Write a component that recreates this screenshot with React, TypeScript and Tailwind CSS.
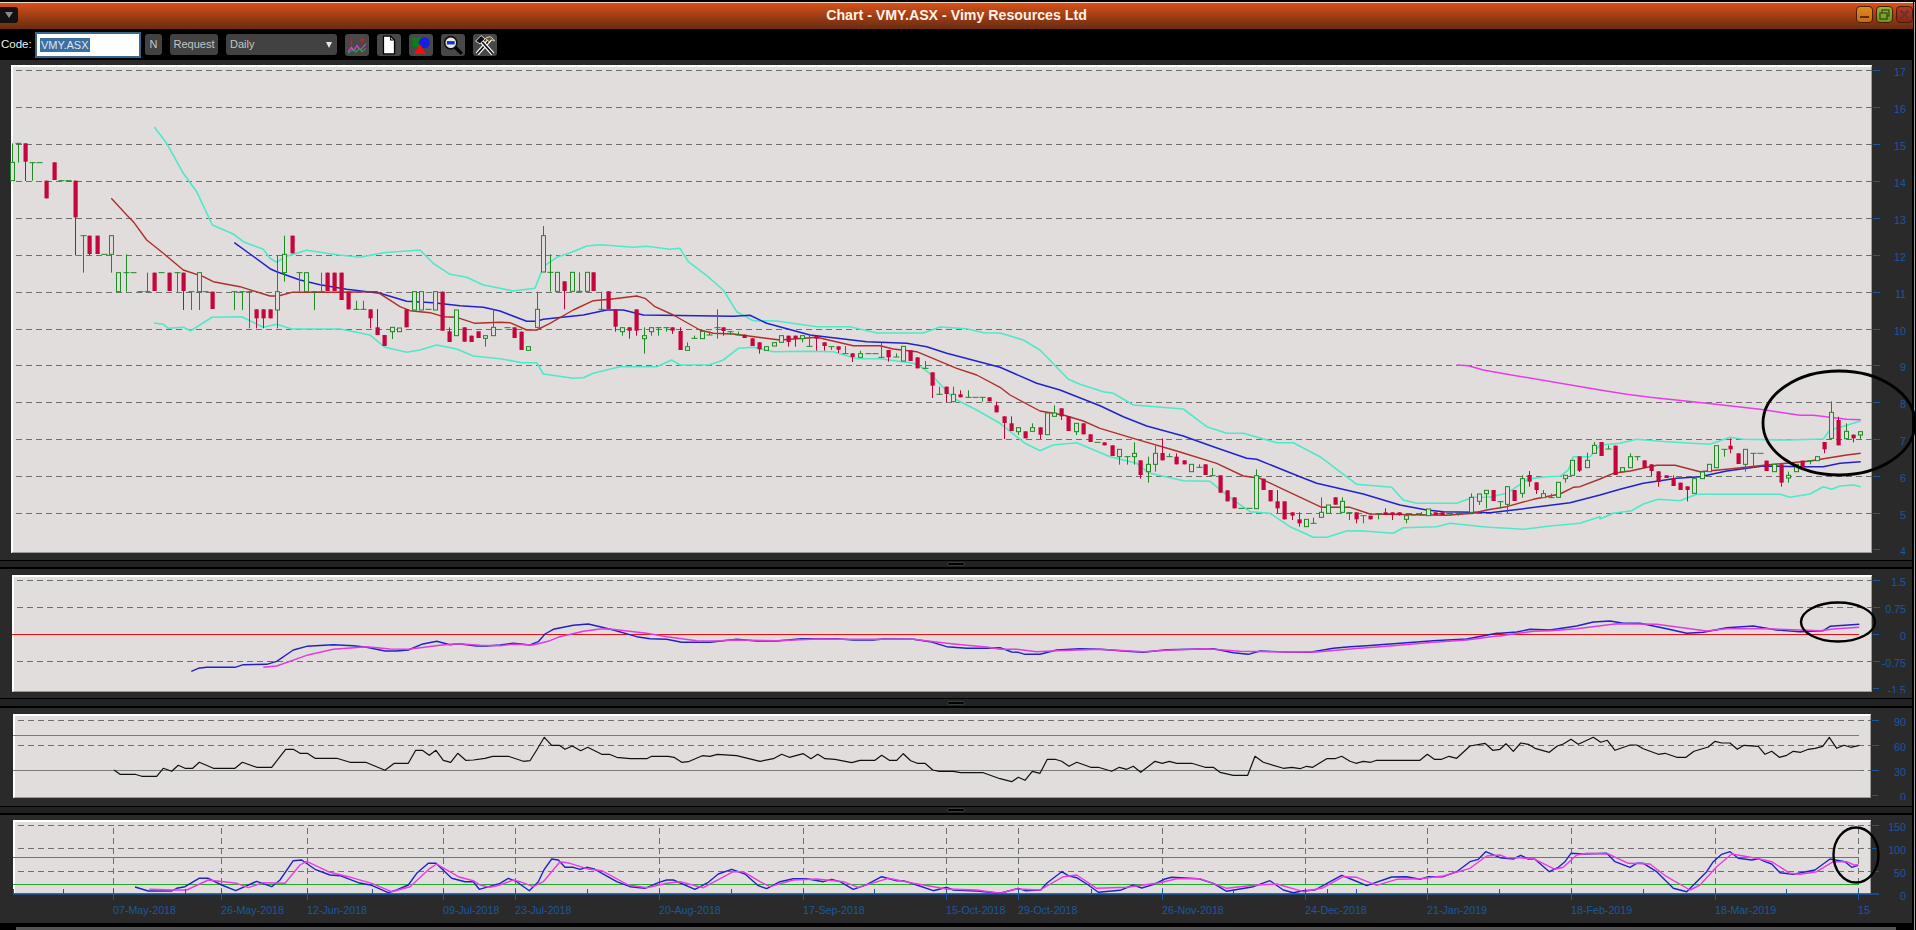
import React from "react";

const P = (x0: number, y0: number, s: string) =>
  s.trim().split(/\s+/).map((p) => {
    const [a, b] = p.split(",").map(Number);
    return `${(x0 + a / 3).toFixed(1)},${(y0 + b / 3).toFixed(1)}`;
  }).join(" ");
const J = (...a: string[]) => a.join(" ");

type C = { k: string; x: number; t: number; b: number; w1: number; w2: number };
const cs = (x0: number, y0: number, s: string): C[] =>
  s.trim().split(/\s+/).map((e) => {
    const k = e[0];
    const n = e.slice(1).split(",").map(Number);
    const x = Math.round(x0 + n[0] / 3);
    const t = y0 + n[1] / 3;
    const b = k === "F" ? t : y0 + n[2] / 3;
    const ex = n.slice(k === "F" ? 2 : 3).map((v) => y0 + v / 3);
    return { k, x, t, b, w1: Math.min(t, b, ...ex), w2: Math.max(t, b, ...ex) };
  });

const candles: C[] = [
  ...cs(0, 130, `G36,97,152,40 F55,40,98 R75,40,95,153 F97,98,152 F118,98 R138,152,205 R162,97,150 F183,152 F204,152 R225,152,262,376 F248,317,428 R267,317,372,376 R290,317,372 F312,373 G334,317,373,428 G355,428,485 F377,428,373,485 F398,428 F420,485 F442,485,428 R462,428,483 F484,428 R507,428,483 F530,428,487 R549,428,483,540 F572,485,540 G596,428,485,540 F616,485 R636,485,537 F703,485,540 F725,485,540 F746,485,595 R768,538,565,595 R790,538,565,595 R810,538,565 G832,485,540,376,595 G853,373,428,317,455 R876,317,370 F897,428,485 G919,428,485 F941,485,540 F962,485,428 R981,428,483 R1002,428,483 R1023,428,510 R1044,485,538 F1067,538,512 F1089,538,512 R1110,538,565,595 R1132,592,615,537 R1152,615,648 G1177,592,605,627 G1198,594,605 R1218,538,592 G1241,485,540 G1262,485,540 F1285,538 G1306,485,540 R1326,485,602 R1347,604,636,592 G1369,540,617 R1392,592,635 R1412,617,636 R1434,604,624 G1456,617,625,650 G1478,592,617,538`),
  ...cs(500, 210, `F20,353 R42,352,384 R63,365,420 G85,410,421 G110,298,352,245 G130,77,186,48 F151,187,133,245 G172,187,244 R192,214,243,298 G217,187,244 F238,244,187 G260,187,244 R279,187,243 F302,298,245 R324,244,297 R345,298,350,365 G367,353,365,377 R387,352,362,386 R408,298,362,377 G433,377,386,352,431 G454,353,365,377 F475,353,377 F497,353,365 R516,352,362,372 R540,363,420,352 G562,410,421,397 F583,385,377 G605,364,386 F627,375,365 F650,353,298,386 R669,352,363,377 F691,365,375 F713,375,365 R732,374,384 R756,385,408 R778,397,418,431 G799,410,421 G821,398,408 G842,377,397 R864,377,396,410 R885,377,386,410 G907,377,386,397 F928,409,375 R948,378,386,422 R972,397,408,422 F994,410,420 R1014,409,419,429 F1036,431,408 R1056,430,441,456 G1081,431,442,422 F1103,431 F1125,431 F1144,442,398 R1164,420,442,455 F1189,441,430 G1210,409,453 R1230,421,453 R1251,442,475 F1274,475,453 R1296,487,527,564 F1318,553,530 R1338,530,552,577 G1360,553,575,530 R1381,553,562,541 F1405,562,541 F1425,562 F1447,562,575 R1467,562,574 R1488,586,607,575`),
  ...cs(1000, 340, `R12,229,249,297 R33,250,273,229 G55,263,275,285 R75,274,295 G97,263,274,250 R120,262,284,297 G142,219,284 G163,219,229,196 R183,205,229,240 R204,229,273 G229,250,275,285 R249,250,283 R270,283,306 F292,307 R312,307,316 R336,316,348 G358,328,350,374 F380,350,374 G401,340,350,307,374 R420,361,405,416 G445,373,395,350,428 G466,340,373,317,395 R486,339,361,295 F508,350,340 R528,350,373,340 R551,361,373 G574,373,395 F596,382,373 R615,373,405 F637,407,384 R660,406,458 R681,451,484 R702,472,505 F724,505 F746,505 G769,407,506,388 R789,416,450 R810,450,484 R832,484,505,450,520 R852,484,538 R876,517,527,540 R897,538,550,517,560 G919,538,560 F940,550,533 G964,517,532,472 G985,495,520 R1005,472,494 G1027,484,517,472 F1048,518,540 R1068,517,538,550 F1090,527,550 R1110,527,538 F1135,521,538 R1156,517,525,505 R1176,517,525,540 R1197,517,525,527 G1219,527,538,550 F1240,525 F1264,525,516 G1285,507,527 R1305,517,525 R1326,517,525 F1350,520,527 F1373,520,527 F1392,520 G1414,472,517,460 G1436,462,484,495 G1459,451,461,505`),
  ...cs(1490, 400, `R8,270,303 F31,305,325 G52,260,313,340 R72,270,303 G97,236,280,226,293 R117,225,245,213,260 R138,247,270,282 G160,281,293,270 F182,293,281 G205,247,292 G226,226,236,248 G247,181,226 R267,169,212,216 G290,181,203,158 G313,136,160,126 R333,126,168 F355,147,136 R375,137,225`),
  ...cs(1600, 340, `G67,383,395 G91,350,383,340 F112,350,361 R132,361,383 R153,373,393,408 R174,394,426,440 R198,406,414 R219,414,438,406 R240,428,450 R261,439,450,484 G283,416,460 G307,396,416 G328,373,395 G349,317,383 F371,328,350 R390,317,328,295,340 R414,340,372 G436,328,373,395 F458,340,384 F480,340 R498,362,393 G523,373,395 R543,373,428,440 G565,406,414,395,428 G587,373,395 R606,362,382 F631,362,373 G652,350,362 R672,306,328,340 G694,217,295,184 R714,240,316,230 G739,274,296,250 R759,284,295,307 G781,275,285,297`),
];

const upper = J(
  P(0, 130, `463,-9 500,40 550,130 590,185 637,285 700,312 730,335 790,358 810,385 830,397 855,380 920,361 1010,374 1080,382 1150,368 1260,360 1300,400 1350,433 1400,442 1450,465`),
  P(500, 210, `0,235 40,243 105,235 130,170 170,142 215,127 260,108 300,104 400,112 440,109 510,118 540,115 565,155 620,197 670,240 710,305 760,332 830,333 950,350 1050,350 1130,369 1270,369 1320,351 1400,356 1450,368`),
  P(1000, 340, `0,-21 70,0 120,30 205,118 240,133 310,155 340,160 400,195 550,207 620,260 680,280 730,280 830,308 880,308 960,350 1070,433 1175,442 1210,480 1250,490 1370,490 1420,472`),
  P(1490, 400, `0,291 50,280 95,250 115,237 170,230 210,229 235,210 250,170 300,170`),
  P(1600, 340, `0,315 60,310 110,298 200,305 330,313 390,292 430,298 560,300 670,297 690,270 720,262 782,243`)
);
const lower = J(
  P(0, 130, `462,579 490,583 505,595 550,592 572,602 636,562 725,560 790,592 830,583 875,597 1020,597 1110,615 1155,652 1220,667 1260,660 1310,645 1370,657 1420,678`),
  P(500, 210, `0,446 65,458 110,458 130,492 220,505 250,503 280,490 360,470 470,470 515,450 540,465 630,464 670,450 715,415 760,412 820,425 920,424 1000,425 1070,446 1140,446 1240,460 1270,475 1300,500 1360,565 1430,600`),
  P(1000, 340, `0,250 75,310 120,332 160,315 230,308 330,350 410,370 445,398 550,422 630,424 700,480 750,515 810,520 870,560 940,592 980,592 1040,573 1080,572 1180,580 1210,563 1310,560 1350,550 1450,560`),
  P(1490, 400, `0,382 100,388 180,378 270,370 330,350`),
  P(1600, 340, `0,537 40,520 95,512 130,492 175,478 240,482 290,463 540,463 570,472 630,462 670,440 695,448 720,438 760,435 782,440`)
);
const maRed = J(
  P(0, 130, `334,205 380,255 400,275 440,330 490,370 550,420 610,440 640,455 720,470 810,498 835,498 875,487 1000,487 1130,485 1200,530 1230,542 1290,548 1330,560 1370,562 1425,580`),
  P(500, 210, `0,337 30,338 80,360 110,360 150,340 220,300 280,272 330,268 410,258 435,265 465,290 520,315 600,360 640,370 700,372 840,390 950,382 1060,407 1140,407 1180,417 1250,425 1370,475 1430,495`),
  P(1000, 340, `0,142 30,165 120,213 190,225 250,243 300,265 410,298 530,333 650,370 730,408 780,415 850,448 965,502 1050,502 1110,522 1340,526 1420,520 1460,510`),
  P(1490, 400, `50,320 130,298 210,282 250,262 270,260`),
  P(1600, 340, `0,417 40,400 90,393 170,376 225,376 300,395 380,388 500,375 630,363 680,355 740,345 782,340`)
);
const maBlue = J(
  P(0, 130, `703,338 750,372 810,416 830,425 900,450 960,464 1040,478 1140,490 1220,514 1300,518 1380,527 1450,532`),
  P(500, 210, `0,303 80,334 110,334 130,328 250,315 320,300 370,300 430,315 700,319 750,316 800,340 930,375 1100,395 1220,400 1280,410 1340,430`),
  P(1000, 340, `0,82 110,130 180,150 300,197 370,230 440,258 550,288 640,320 740,355 770,358 900,410 950,430 1090,462 1200,495 1280,510 1330,515 1420,517`),
  P(1490, 400, `0,338 70,330 110,325 240,308`),
  P(1600, 340, `0,465 60,448 130,430 230,415 300,410 380,393 490,378 600,380 670,380 720,370 782,365`)
);
const maMag = J(
  P(1000, 340, `1370,75 1405,77 1450,90 1500,99`),
  P(1600, 340, `0,150 80,163 150,172 320,190 480,208 600,226 640,226 740,238 782,239`)
);

const macdBlue = J(
  P(0, 540, `574,394 595,385 620,382 705,382 730,374 800,373 830,364 880,330 920,319 1000,314 1060,317 1100,322 1155,333 1190,333 1225,330 1265,313 1310,304 1350,314 1375,311 1430,318 1460,318`),
  P(500, 590, `0,165 40,160 90,165 115,155 135,132 160,118 220,106 265,102 300,110 340,120 410,140 450,146 500,148 545,157 630,157 710,148 770,153 830,153 905,146 950,146 1010,146 1060,150 1120,150 1150,147 1240,148 1290,155 1340,170 1400,175 1460,175`),
  P(1000, 590, `0,173 35,186 55,187 75,193 120,193 170,180 240,176 300,178 380,184 430,187 500,179 640,176 700,188 745,193 780,183 860,186 930,187 1000,175 1050,170 1100,167 1200,160 1300,152 1400,147 1490,130`),
  P(1500, 560, `0,220 50,216 90,208 150,210 230,198 280,186 330,183 370,190 420,190 500,206 560,220 610,217 680,203 760,198 830,210 900,215 970,212 990,199 1078,193`)
);
const macdMag = J(
  P(0, 540, `790,382 830,378 920,346 1000,328 1040,325 1100,320 1170,327 1225,328 1320,316 1375,311 1440,316`),
  P(500, 590, `0,167 40,163 100,165 150,152 180,140 250,124 300,117 330,117 440,130 500,140 590,152 650,153 700,150 830,152 950,147 1050,148 1240,148 1340,160 1400,166 1460,171`),
  P(1000, 590, `0,178 50,178 110,185 170,182 300,178 430,185 500,181 620,176 720,184 880,186 950,186 1060,176 1170,168 1300,157 1400,150 1490,138`),
  P(1500, 560, `0,228 40,222 100,214 150,212 230,206 350,191 470,193 620,213 680,206 800,206 900,210 960,212 1000,207 1078,202`)
);
const rsi = J(
  P(0, 540, `342,690 360,703 405,703 425,709 470,709 490,685 515,694 535,676 555,685 578,685 598,667 640,685 705,685 727,667 770,682 815,682 857,628 880,628 900,640 922,640 945,655 1010,655 1050,667 1097,667 1155,691 1183,670 1225,670 1247,631 1267,631 1288,646 1308,631 1330,661 1352,667 1373,640 1397,661 1420,660 1455,655 1478,649`),
  P(500, 590, `0,499 25,499 70,514 90,512 110,480 133,442 155,466 178,466 195,478 217,468 242,482 263,472 305,493 328,493 350,502 390,506 440,506 455,499 505,499 522,502 545,517 565,515 607,497 630,499 652,493 710,497 780,514 820,506 845,493 868,502 910,491 933,506 953,493 975,506 1005,508 1055,518 1080,511 1125,511 1145,496 1168,511 1190,511 1210,491 1232,512 1252,520 1275,520 1298,540 1318,544 1360,544 1382,548 1450,548`),
  P(1000, 590, `0,566 35,575 55,562 75,571 97,544 120,550 142,508 165,508 185,514 207,529 230,517 272,532 295,532 335,544 358,532 380,538 400,529 422,547 465,514 487,520 508,514 530,520 575,520 615,532 640,532 660,547 700,556 743,556 765,499 790,517 850,535 875,532 900,536 920,529 938,532 980,506 1005,506 1025,499 1050,514 1068,520 1090,514 1112,517 1130,511 1260,511 1282,493 1303,508 1325,508 1347,499 1370,505 1410,468 1455,460 1478,481`),
  P(1500, 560, `0,568 18,551 40,574 62,549 85,553 105,565 148,577 172,558 190,552 213,538 235,553 280,532 302,547 322,541 345,571 390,555 410,555 430,566 475,583 495,580 530,592 558,592 582,574 625,561 645,544 665,549 690,549 712,568 732,556 775,559 795,583 815,574 838,592 860,586 880,574 902,577 925,568 945,565 968,559 988,532 1010,565 1032,556 1052,562 1078,556`)
);
const stoBlue = J(
  P(0, 540, `405,1041 445,1053 515,1053 530,1045 555,1040 597,1015 625,1015 665,1035 707,1052 770,1024 815,1040 840,1020 880,962 905,960 945,988 990,1005 1020,1007 1075,1028 1115,1036 1165,1058 1190,1050 1225,1035 1250,1000 1285,970 1308,970 1355,1015 1395,1025 1420,1025 1438,1048`),
  P(500, 590, `0,880 25,865 50,875 88,902 115,875 133,838 155,807 175,810 195,832 220,832 240,838 260,832 285,838 350,875 390,890 435,895 475,878 500,870 520,870 585,898 625,877 655,852 695,838 735,852 775,887 800,896 840,875 880,866 920,866 970,875 995,868 1020,875 1060,898 1100,884 1145,860 1190,872 1210,872 1250,885 1300,902 1340,892 1360,900 1430,903`),
  P(1000, 590, `0,910 55,895 75,902 122,900 140,880 185,845 205,857 230,863 265,885 295,907 360,901 400,885 425,894 460,884 495,867 515,862 595,866 640,880 680,904 760,890 810,872 850,900 880,908 910,902 945,900 985,878 1025,856 1060,870 1100,887 1175,861 1220,860 1260,868 1285,860 1330,860 1370,845 1410,815 1435,808 1457,785`),
  P(1500, 560, `0,893 40,897 62,886 85,897 105,898 148,935 175,922 195,905 213,880 250,882 320,880 345,905 390,922 410,910 430,910 470,935 520,985 560,995 620,935 640,905 665,883 690,875 715,895 755,900 775,896 795,905 815,912 840,938 880,943 945,930 990,897 1035,905 1055,922 1075,916`)
);
const stoMag = J(
  P(0, 540, `448,1048 520,1050 560,1050 625,1020 710,1030 745,1043 790,1028 855,1030 900,975 920,964 990,997 1045,1010 1115,1030 1175,1055 1230,1040 1290,985 1310,972 1375,1010 1420,1022 1440,1035 1470,1042`),
  P(500, 590, `0,885 40,870 60,875 100,890 130,875 180,815 210,820 260,836 305,842 385,885 440,893 500,880 540,875 610,893 700,845 730,845 780,875 810,890 880,870 950,867 1030,875 1075,892 1165,865 1240,880 1340,897 1430,900`),
  P(1000, 590, `0,910 50,897 120,900 190,860 230,855 290,895 380,892 480,878 530,866 600,866 680,895 770,885 830,882 910,905 970,893 1030,860 1070,862 1130,886 1190,868 1260,866 1330,858 1410,835 1460,798`),
  P(1500, 560, `0,885 20,893 60,893 105,898 165,928 190,922 230,885 260,880 325,882 385,910 450,912 500,950 570,990 600,975 650,920 695,882 730,888 775,896 815,905 870,940 900,943 950,935 1000,905 1040,905 1062,915 1075,914`)
);

const dates: [string, number][] = [
  ["07-May-2018", 113], ["26-May-2018", 221], ["12-Jun-2018", 307], ["09-Jul-2018", 443], ["23-Jul-2018", 515],
  ["20-Aug-2018", 659], ["17-Sep-2018", 803], ["15-Oct-2018", 946], ["29-Oct-2018", 1018], ["26-Nov-2018", 1162],
  ["24-Dec-2018", 1305], ["21-Jan-2019", 1427], ["18-Feb-2019", 1571], ["18-Mar-2019", 1715], ["15-", 1858],
];
const minor = [13, 63, 185, 372, 587, 731, 874, 1091, 1233, 1327, 1356, 1499, 1643, 1786];

const TICK = "#17589f";
const GRID = "#6e6e6e";

function Grid({ ys, x1, x2 }: { ys: number[]; x1: number; x2: number }) {
  return (
    <>
      {ys.map((y) => (
        <g key={y}>
          <line x1={x1} x2={x2} y1={y} y2={y} stroke={GRID} strokeDasharray="6 4" />
          <line x1={x2 + 1} x2={x2 + 8} y1={y} y2={y} stroke={TICK} />
        </g>
      ))}
    </>
  );
}
function Line({ pts, c, w = 1.4 }: { pts: string; c: string; w?: number }) {
  return <polyline points={pts} fill="none" stroke={c} strokeWidth={w} strokeLinejoin="round" />;
}

function Plot({ x, y, w, h, cls, children }: { x: number; y: number; w: number; h: number; cls: string; children: React.ReactNode }) {
  return (
    <div className={`relative shrink-0 bg-[#e0dddc] ${cls}`}>
      <div className="absolute inset-0 border-t-2 border-l-2 border-t-white border-l-white border-b border-r border-b-[#9a9a9a] border-r-[#9a9a9a]" />
      <svg width={w} height={h} viewBox={`${x} ${y} ${w} ${h}`} className="absolute left-0 top-0 z-10 overflow-visible">
        {children}
      </svg>
    </div>
  );
}

function Scale({ top, labels, cls }: { top: number; labels: [string, number][]; cls: string }) {
  return (
    <div className={`relative flex-1 overflow-hidden ${cls}`}>
      {labels.map(([t, y]) => (
        <span
          key={t}
          className="absolute right-[6px] -translate-y-1/2 whitespace-nowrap text-[10.7px] leading-none text-[#17589f]"
          style={{ top: y - top }}
        >
          {t}
        </span>
      ))}
    </div>
  );
}

function Sash({ cls }: { cls: string }) {
  return (
    <div className={`flex shrink-0 items-center justify-center border-t border-b-2 border-black bg-[#222224] mr-px ${cls}`}>
      <div className="h-[4px] w-[18px] rounded-[2px] border border-[#3a3a3a] bg-black" />
    </div>
  );
}

function TB({ children, cls }: { children: React.ReactNode; cls: string }) {
  return (
    <div className={`flex h-[21px] items-center rounded-[3px] bg-[#424242] text-[11px] text-[#c4c4c4] ${cls}`}>{children}</div>
  );
}
function IconBtn({ children }: { children: React.ReactNode }) {
  return (
    <div className="flex h-[22px] w-[24px] items-center justify-center rounded-[3px] bg-[#484848]">
      <svg width="20" height="20" viewBox="0 0 18 18">{children}</svg>
    </div>
  );
}
function WinBtn({ cls, children }: { cls: string; children: React.ReactNode }) {
  return (
    <div className={`flex h-[17px] w-[17px] items-center justify-center rounded-[4px] border border-[#4a1d08] ${cls}`}>
      <svg width="13" height="13" viewBox="0 0 13 13">{children}</svg>
    </div>
  );
}

export default function App() {
  return (
    <div className="flex h-[930px] w-[1916px] overflow-hidden bg-black font-['Liberation_Sans',Arial,sans-serif]">
      <div className="flex w-[1913px] shrink-0 flex-col pt-[2px]">
        {/* title */}
        <div className="relative flex h-[27px] shrink-0 items-center justify-center border-t border-[#f3d9c6] bg-linear-to-b from-[#d9511a] to-[#682b0f]">
          <span className="text-[14.2px] font-bold text-[#fff3e6]">Chart - VMY.ASX - Vimy Resources Ltd</span>
          <div className="absolute left-0 top-[4px] flex h-[16px] w-[18px] items-center justify-center rounded-r-[3px] bg-[#111]">
            <div className="h-0 w-0 border-x-[4px] border-t-[6px] border-x-transparent border-t-[#8a8a8a]" />
          </div>
          <div className="absolute right-0 top-[3px] flex gap-[3px]">
            <WinBtn cls="bg-linear-to-b from-[#e08a20] to-[#c96a12]">
              <rect x="2" y="8" width="9" height="2" fill="#5a3208" />
            </WinBtn>
            <WinBtn cls="bg-linear-to-b from-[#93b437] to-[#6d9126]">
              <rect x="4" y="2" width="7" height="6" fill="none" stroke="#37500f" strokeWidth="1.3" />
              <rect x="2" y="5" width="7" height="6" fill="#7fa32e" stroke="#37500f" strokeWidth="1.3" />
            </WinBtn>
            <WinBtn cls="bg-linear-to-b from-[#b53a25] to-[#8e2415]">
              <path d="M2.5 2.5 10.5 10.5 M10.5 2.5 2.5 10.5" stroke="#5c3a32" strokeWidth="2.2" />
            </WinBtn>
          </div>
        </div>
        {/* toolbar */}
        <div className="flex h-[31px] shrink-0 items-center bg-black">
          <span className="ml-[1px] w-[34px] text-[11.5px] text-[#eeeeee]">Code:</span>
          <div className="flex h-[26px] w-[106px] items-center border-2 border-[#3b6690] bg-white pl-[3px]">
            <span className="bg-[#3c6e9f] px-px text-[11px] leading-[14px] text-[#dfe8f0]">VMY.ASX</span>
          </div>
          <TB cls="ml-[4px] w-[17px] justify-center">N</TB>
          <TB cls="ml-[8px] w-[48px] justify-center">Request</TB>
          <TB cls="ml-[8px] w-[111px] justify-between pl-[4px] pr-[5px]">
            <span>Daily</span>
            <span className="h-0 w-0 border-x-[3.5px] border-t-[6px] border-x-transparent border-t-[#e8e8e8]" />
          </TB>
          <div className="ml-[8px] flex gap-[8px]">
            <IconBtn>
              <path d="M4 2.5v.9 M4 5v4.5" stroke="#e0143c" strokeWidth="1.4" />
              <path d="M13.5 2v5 M11 4.5h5" stroke="#d02020" strokeWidth="1.1" />
              <path d="M1 15 4 11 6.5 14 9 9.5 12 13.5 17 8" fill="none" stroke="#e040e0" strokeWidth="1" />
              <path d="M1 16.5 5 13 8 15.5 11 12 13.5 15 17 12" fill="none" stroke="#30a050" strokeWidth="1" />
            </IconBtn>
            <IconBtn>
              <path d="M4 1h6.5L14 4.5V17H4z" fill="#fff" stroke="#000" strokeWidth="1.2" />
              <path d="M10.5 1v3.5H14" fill="none" stroke="#000" strokeWidth="1" />
            </IconBtn>
            <IconBtn>
              <rect x="1" y="2" width="9" height="9" fill="#0f7a1f" />
              <circle cx="12" cy="7" r="5" fill="#1420e0" />
              <path d="M8 8 13.5 17H2.5z" fill="#f01010" />
            </IconBtn>
            <IconBtn>
              <path d="M11 11 17 17" stroke="#000" strokeWidth="3" />
              <circle cx="7" cy="7" r="5.5" fill="#e8e8e8" stroke="#111" strokeWidth="1.5" />
              <rect x="3.5" y="5.5" width="7" height="3" fill="#1630c8" />
            </IconBtn>
            <IconBtn>
              <path d="M2 17 14 3.5" stroke="#fff" strokeWidth="3.6" />
              <path d="M2 17 14 3.5" stroke="#111" strokeWidth="1.4" />
              <path d="M16 17 4 3.5" stroke="#fff" strokeWidth="3.6" />
              <path d="M16 17 4 3.5" stroke="#111" strokeWidth="1.4" />
              <path d="M0.5 5.5 5.5 0.5l3.5 3-4.5 4.5z" fill="#111" stroke="#eee" strokeWidth="0.8" />
              <path d="M9.5 3c3.5-2.5 6-1.5 8 2.5-2.5-1.5-3.5-1.5-4.5 1z" fill="#6a5624" stroke="#eee" strokeWidth="0.8" />
            </IconBtn>
          </div>
        </div>

        {/* price pane */}
        <div className="mr-px flex h-[500px] shrink-0 bg-[#2b2a2b] pl-[11px] pt-[5px]">
          <Plot x={11} y={65} w={1861} h={488} cls="h-[488px] w-[1861px]">
            <Grid ys={[70.5, 107.5, 144.5, 181.5, 218.5, 255.5, 292.5, 329.5, 365.5, 402.5, 439.5, 476.5, 513.5]} x1={16} x2={1872} />
            <line x1={1873} x2={1880} y1={549.5} y2={549.5} stroke={TICK} />
            <Line pts={upper} c="#4fe8c8" w={1.6} />
            <Line pts={lower} c="#4fe8c8" w={1.6} />
            <Line pts={maBlue} c="#2222cc" w={1.5} />
            <Line pts={maRed} c="#ad302a" w={1.4} />
            <Line pts={maMag} c="#e83ce8" w={1.5} />
            {candles.map((c, i) => {
              const green = c.k !== "R";
              const col = green ? "#1f8a24" : "#c4063c";
              const cx = c.x + 0.5;
              return (
                <g key={i}>
                  {c.w2 > c.w1 && <line x1={cx} x2={cx} y1={c.w1} y2={c.w2} stroke={col} />}
                  {c.k === "F" && <line x1={cx - 3} x2={cx + 3} y1={c.t} y2={c.t} stroke={col} />}
                  {c.k === "G" && <rect x={cx - 2} y={c.t} width={4} height={c.b - c.t} fill="#e0dddc" stroke={col} />}
                  {c.k === "R" && <rect x={cx - 2} y={c.t} width={4.2} height={c.b - c.t} fill={col} />}
                </g>
              );
            })}
            <ellipse cx={1839} cy={423} rx={76} ry={52} fill="none" stroke="#000" strokeWidth={2.8} />
          </Plot>
          <Scale top={65} cls="h-[495px]" labels={[["17", 72], ["16", 109], ["15", 146], ["14", 183], ["13", 220], ["12", 257], ["11", 294], ["10", 331], ["9", 367], ["8", 404], ["7", 441], ["6", 478], ["5", 515], ["4", 551]]} />
        </div>
        <Sash cls="h-[9px]" />

        {/* macd pane */}
        <div className="mr-px flex h-[129px] shrink-0 bg-[#2b2a2b] pl-[12px] pt-[6px]">
          <Plot x={12} y={575} w={1860} h={117} cls="h-[117px] w-[1860px]">
            <Grid ys={[580.5, 607.5, 661.5]} x1={17} x2={1872} />
            <line x1={1873} x2={1879} y1={634.5} y2={634.5} stroke={TICK} />
            <line x1={1873} x2={1879} y1={688.5} y2={688.5} stroke={TICK} />
            <line x1={12} x2={1859} y1={634.5} y2={634.5} stroke="#ee1010" />
            <Line pts={macdBlue} c="#2222c4" />
            <Line pts={macdMag} c="#e03ce0" />
            <ellipse cx={1838} cy={622} rx={37} ry={19.5} fill="none" stroke="#000" strokeWidth={2.4} />
          </Plot>
          <Scale top={575} cls="h-[118px]" labels={[["1.5", 582], ["0.75", 609], ["0", 636], ["-0.75", 663], ["-1.5", 690]]} />
        </div>
        <Sash cls="h-[10px]" />

        {/* rsi pane */}
        <div className="mr-px flex h-[98px] shrink-0 bg-[#2b2a2b] pl-[13px] pt-[6px]">
          <Plot x={13} y={714} w={1858} h={84} cls="h-[84px] w-[1858px]">
            <Grid ys={[720.5, 745.5, 770.5]} x1={18} x2={1871} />
            <line x1={1872} x2={1878} y1={795.5} y2={795.5} stroke={TICK} />
            <line x1={13} x2={1859} y1={735.5} y2={735.5} stroke="#7a7a7a" />
            <line x1={13} x2={1859} y1={770.5} y2={770.5} stroke="#7a7a7a" />
            <Line pts={rsi} c="#111111" w={1.2} />
          </Plot>
          <Scale top={714} cls="h-[86px]" labels={[["90", 722], ["60", 747], ["30", 772], ["0", 797]]} />
        </div>
        <Sash cls="h-[9px]" />

        {/* stochastic pane */}
        <div className="mr-px flex h-[108px] shrink-0 bg-[#2b2a2b] pl-[13px] pt-[5px]">
          <div className="flex w-[1858px] shrink-0 flex-col">
            <Plot x={13} y={820} w={1858} h={74} cls="h-[74px] w-[1858px]">
              <Grid ys={[825.5, 848.5, 871.5]} x1={18} x2={1871} />
              {dates.map(([d, x]) => (
                <line key={d} x1={x + 0.5} x2={x + 0.5} y1={828} y2={893} stroke={GRID} strokeDasharray="6 4" />
              ))}
              <line x1={13} x2={1859} y1={857.5} y2={857.5} stroke="#1faa2a" />
              <line x1={13} x2={1859} y1={884.5} y2={884.5} stroke="#1faa2a" />
              <Line pts={stoBlue} c="#2222c4" />
              <Line pts={stoMag} c="#e83ce8" />
              <line x1={13} x2={1879} y1={894} y2={894} stroke={TICK} strokeWidth={1.4} />
              {dates.map(([d, x]) => (
                <line key={d} x1={x + 0.5} x2={x + 0.5} y1={889} y2={900} stroke={TICK} />
              ))}
              {minor.map((x) => (
                <line key={x} x1={x + 0.5} x2={x + 0.5} y1={889} y2={894} stroke={TICK} />
              ))}
              <ellipse cx={1856} cy={855} rx={22.5} ry={27.5} fill="none" stroke="#000" strokeWidth={2.4} />
            </Plot>
            <div className="relative h-[29px] overflow-hidden">
              {dates.map(([d, x]) => (
                <span
                  key={d}
                  className="absolute top-[16px] -translate-y-1/2 whitespace-nowrap text-[10.7px] leading-none text-[#17589f]"
                  style={{ left: x - 13 }}
                >
                  {d}
                </span>
              ))}
            </div>
          </div>
          <Scale top={820} cls="h-[103px]" labels={[["150", 827], ["100", 850], ["50", 873], ["0", 896]]} />
        </div>

        <div className="ml-[16px] mt-[4px] h-[3px] w-[1880px] shrink-0 bg-[#555555]" />
      </div>
      <div className="ml-px mt-[2px] w-px shrink-0 bg-[#a8a8a8]" />
    </div>
  );
}
